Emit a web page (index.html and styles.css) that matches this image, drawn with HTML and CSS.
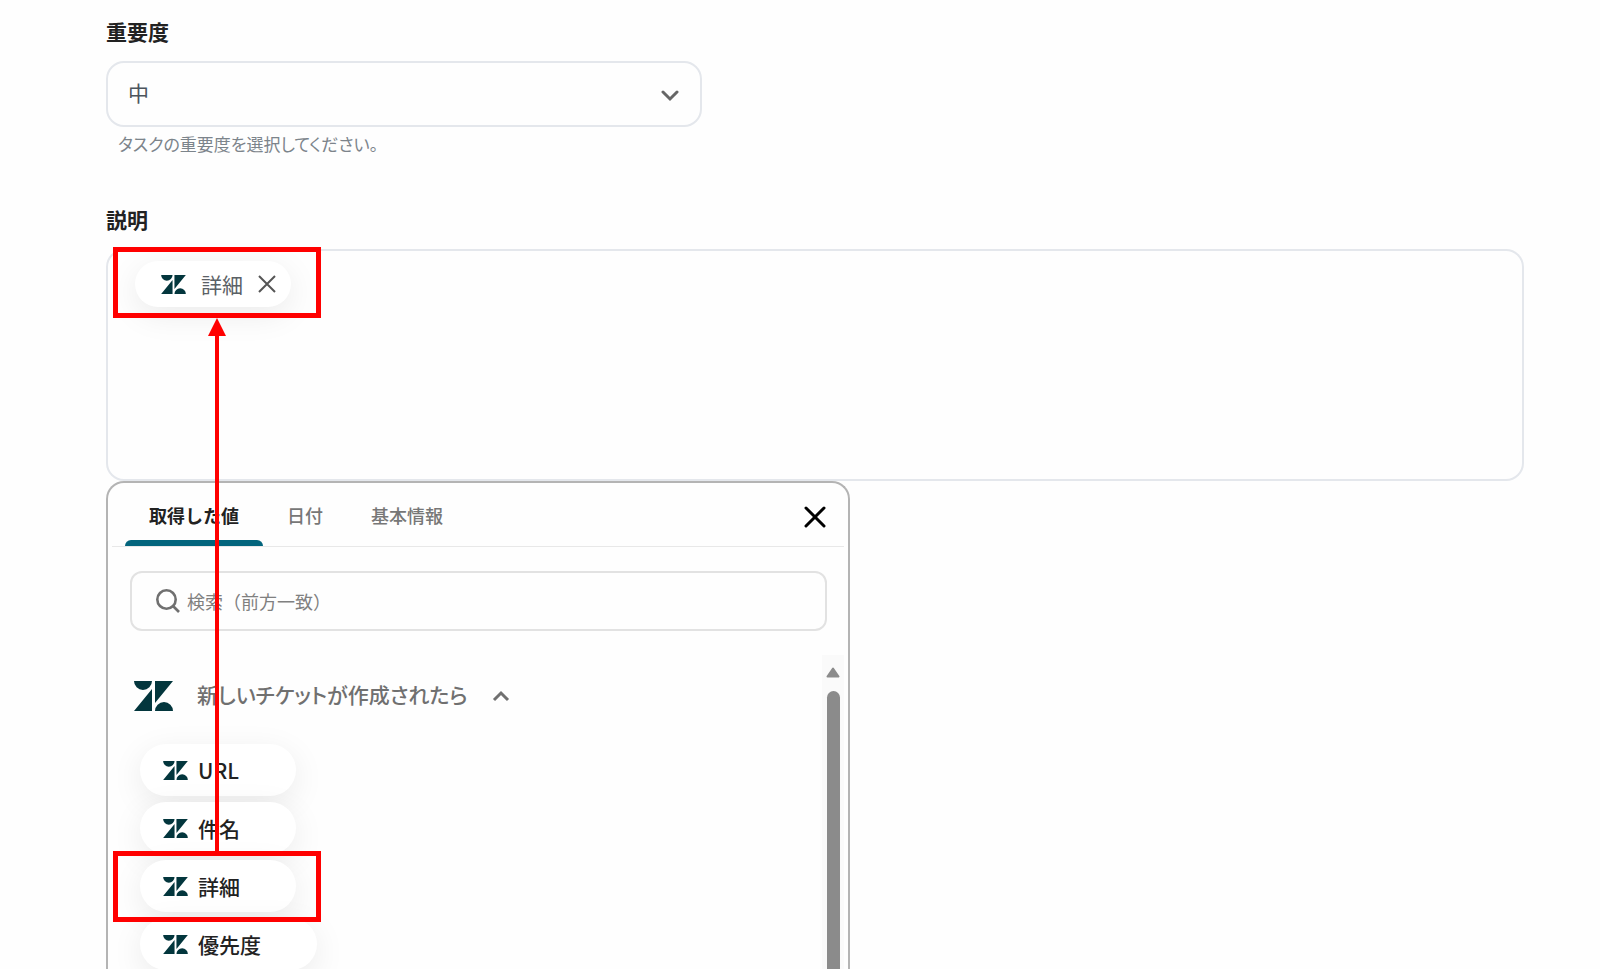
FILE: index.html
```html
<!DOCTYPE html>
<html lang="ja">
<head>
  <meta charset="UTF-8" />
  <meta name="viewport" content="width=device-width, initial-scale=1.0"/>
  <title>タスクの設定</title>
  <link rel="stylesheet" href="styles.css">
</head>
<body>

  <svg width="0" height="0" class="sprite" aria-hidden="true">
    <symbol id="zendesk" viewBox="0 0 39 30">
      <path d="M0 0h18a9 9 0 0 1-18 0zM18 8v22H0zM21 0h18L21 22zM21 30a9 9 0 0 1 18 0z"/>
    </symbol>
  </svg>

  <main class="page">

    <!-- 重要度 -->
    <section class="field">
      <label class="field-label" for="priority">重要度</label>
      <div class="select-wrap">
        <select id="priority">
          <option>高</option>
          <option selected>中</option>
          <option>低</option>
        </select>
        <svg class="select-arrow" viewBox="0 0 18 12" aria-hidden="true"><path d="M2 2l7 7 7-7"/></svg>
      </div>
      <p class="help">タスクの重要度を選択してください。</p>
    </section>

    <!-- 説明 -->
    <section class="field">
      <h2 class="field-label" id="description-label">説明</h2>
      <div class="editor" aria-labelledby="description-label">
        <span class="chip">
          <svg class="logo-small"><use href="#zendesk"/></svg>
          <span>詳細</span>
          <button type="button" class="chip-remove" aria-label="削除">
            <svg viewBox="0 0 18 18"><path d="M1 1l16 16M17 1L1 17"/></svg>
          </button>
        </span>
      </div>
    </section>

    <!-- 値の選択パネル -->
    <section class="picker">
      <div class="picker-head">
        <nav class="tabs">
          <button type="button" class="tab active">取得した値</button>
          <button type="button" class="tab">日付</button>
          <button type="button" class="tab">基本情報</button>
        </nav>
        <button type="button" class="close" aria-label="閉じる">
          <svg viewBox="0 0 22 22"><path d="M2 2l18 18M20 2L2 20"/></svg>
        </button>
      </div>

      <div class="search">
        <svg class="search-icon" viewBox="0 0 24 24" aria-hidden="true"><circle cx="10.5" cy="10.5" r="9.2"/><path d="M17 17l6 6"/></svg>
        <input type="text" placeholder="検索（前方一致）" aria-label="検索（前方一致）">
      </div>

      <div class="picker-body">
        <div class="group">
          <button type="button" class="group-title">
            <svg class="logo"><use href="#zendesk"/></svg>
            <span>新しいチケットが作成されたら</span>
            <svg class="group-arrow" viewBox="0 0 18 12"><path d="M2 10l7-7 7 7"/></svg>
          </button>
          <div class="values">
            <button type="button" class="value"><svg class="logo-small"><use href="#zendesk"/></svg>URL</button>
            <button type="button" class="value"><svg class="logo-small"><use href="#zendesk"/></svg>件名</button>
            <button type="button" class="value"><svg class="logo-small"><use href="#zendesk"/></svg>詳細</button>
            <button type="button" class="value"><svg class="logo-small"><use href="#zendesk"/></svg>優先度</button>
          </div>
        </div>
        <div class="scrollbar" aria-hidden="true">
          <svg viewBox="0 0 14 11"><path d="M7 1.5L12.5 9.5h-11z"/></svg>
          <div class="thumb"></div>
        </div>
      </div>
    </section>

    <!-- 赤枠と矢印 -->
    <div class="mark mark-to"></div>
    <div class="mark mark-from"></div>
    <svg class="mark-arrow" viewBox="0 0 18 536" aria-hidden="true">
      <path d="M9 0l9 18H0zM7 17h4v519H7z"/>
    </svg>

  </main>

</body>
</html>
```
FILE: styles.css
```css
* {
  box-sizing: border-box;
}

body {
  font-family: "Noto Sans CJK JP", sans-serif;
  background: #fefefe;
  color: #222;
  margin: 0;
}

button, select, input {
  font-family: inherit;
  color: inherit;
}

button {
  background: none;
  border: 0;
  padding: 0;
  cursor: pointer;
}

svg {
  flex-shrink: 0;
}

.sprite {
  position: absolute;
}

.page {
  position: relative;
  display: flex;
  flex-direction: column;
  height: 100vh;
  overflow: hidden;
  padding: 15px 76px 0 106px;
}

/* form fields */
.field-label {
  display: block;
  margin: 0 0 14px;
  font-size: 21px;
  font-weight: 700;
  line-height: 32px;
}

.select-wrap {
  position: relative;
  width: 42%;
}

.select-wrap select {
  display: block;
  appearance: none;
  width: 100%;
  height: 66px;
  padding: 0 60px 4px 20px;
  border: 2px solid #e4e7ec;
  border-radius: 18px;
  background: #fefefe;
  color: #4c555d;
  font-size: 21px;
}

.select-arrow {
  position: absolute;
  right: 23px;
  top: 29px;
  width: 18px;
  height: 12px;
  fill: none;
  stroke: #666;
  stroke-width: 3;
  stroke-linecap: round;
}

.help {
  margin: 3px 0 46px 12px;
  color: #7c848b;
  font-size: 17px;
  font-feature-settings: "palt";
  line-height: 27px;
}

.editor {
  height: 232px;
  padding: 10px 27px;
  border: 2px solid #e4e7ec;
  border-radius: 18px;
}

.chip {
  display: inline-flex;
  align-items: center;
  gap: 15px;
  height: 46px;
  padding: 0 15px 0 26px;
  border-radius: 23px;
  background: #fff;
  box-shadow: 0 8px 32px rgba(0, 0, 0, 0.08);
  color: #5b6166;
  font-size: 21px;
}

.chip-remove {
  display: flex;
}

.chip-remove svg {
  width: 18px;
  height: 18px;
  fill: none;
  stroke: #555;
  stroke-width: 2;
}

.logo-small {
  width: 25px;
  height: 19px;
  fill: #03363d;
}

.logo {
  width: 39px;
  height: 30px;
  fill: #03363d;
}

/* value picker */
.picker {
  display: flex;
  flex: 1;
  flex-direction: column;
  width: 52.5%;
  min-height: 0;
  border: 2px solid #b4b4b4;
  border-bottom: 0;
  border-radius: 18px 18px 0 0;
  background: #fefefe;
}

.picker-head {
  display: flex;
  align-items: center;
  justify-content: space-between;
  height: 64px;
  margin: 0 4px;
  padding: 0 18px 0 13px;
  border-bottom: 1px solid #e8e8e8;
}

.tabs {
  display: flex;
  align-self: stretch;
}

.tab {
  display: flex;
  flex-direction: column;
  padding: 19px 24px 0;
  color: #777;
  font-size: 18px;
  font-weight: 500;
  line-height: 27px;
}

.tab.active {
  color: #222;
  font-weight: 700;
}

.tab.active::after {
  content: "";
  height: 6px;
  margin: auto -24px 0;
  border-radius: 6px 6px 0 0;
  background: #03657d;
}

.close {
  display: flex;
  padding-top: 4px;
}

.close svg {
  width: 22px;
  height: 22px;
  fill: none;
  stroke: #000;
  stroke-width: 3;
  stroke-linecap: round;
}

.search {
  display: flex;
  align-items: center;
  gap: 7px;
  height: 60px;
  margin: 24px 21px 24px 22px;
  padding: 0 24px;
  border: 2px solid #e2e2e2;
  border-radius: 12px;
}

.search-icon {
  width: 24px;
  height: 24px;
  fill: none;
  stroke: #707070;
  stroke-width: 2.6;
}

.search input {
  flex: 1;
  min-width: 0;
  padding: 0;
  border: 0;
  outline: 0;
  background: none;
  font-size: 18px;
}

.search input::placeholder {
  color: #808080;
}

.picker-body {
  display: flex;
  flex: 1;
  justify-content: space-between;
  min-height: 0;
  padding-right: 4px;
}

.group {
  padding: 24px 0 0 26px;
}

.group-title {
  display: flex;
  align-items: center;
  height: 34px;
  color: #707070;
  font-size: 21px;
  font-weight: 500;
  font-feature-settings: "palt";
}

.group-title span {
  margin: 0 24px 4px 24px;
}

.group-arrow {
  width: 18px;
  height: 12px;
  fill: none;
  stroke: #707070;
  stroke-width: 3;
}

.values {
  display: flex;
  flex-direction: column;
  align-items: flex-start;
  gap: 6px;
  padding: 31px 6px 0;
}

.value {
  display: flex;
  align-items: center;
  gap: 10px;
  min-width: 156px;
  height: 52px;
  padding: 0 56px 0 23px;
  border-radius: 26px;
  background: #fff;
  box-shadow: 0 8px 32px rgba(0, 0, 0, 0.08);
  color: #222;
  font-size: 21px;
  font-weight: 500;
  flex-shrink: 0;
}

.scrollbar {
  display: flex;
  flex-direction: column;
  align-items: center;
  width: 22px;
  padding-top: 12px;
  background: #fafafa;
}

.scrollbar svg {
  width: 14px;
  height: 11px;
  fill: #8b8b8b;
  stroke: #8b8b8b;
  stroke-width: 2;
  stroke-linejoin: round;
}

.thumb {
  flex: 1;
  width: 13px;
  margin-top: 13px;
  border-radius: 7px 7px 0 0;
  background: #8b8b8b;
}

/* red annotations drawn over the form */
.mark {
  position: absolute;
  left: 113px;
  width: 208px;
  height: 71px;
  border: 5px solid #f00;
}

.mark-to {
  top: 247px;
}

.mark-from {
  top: 851px;
}

.mark-arrow {
  position: absolute;
  left: 208px;
  top: 318px;
  width: 18px;
  height: 536px;
  fill: #f00;
}
```
